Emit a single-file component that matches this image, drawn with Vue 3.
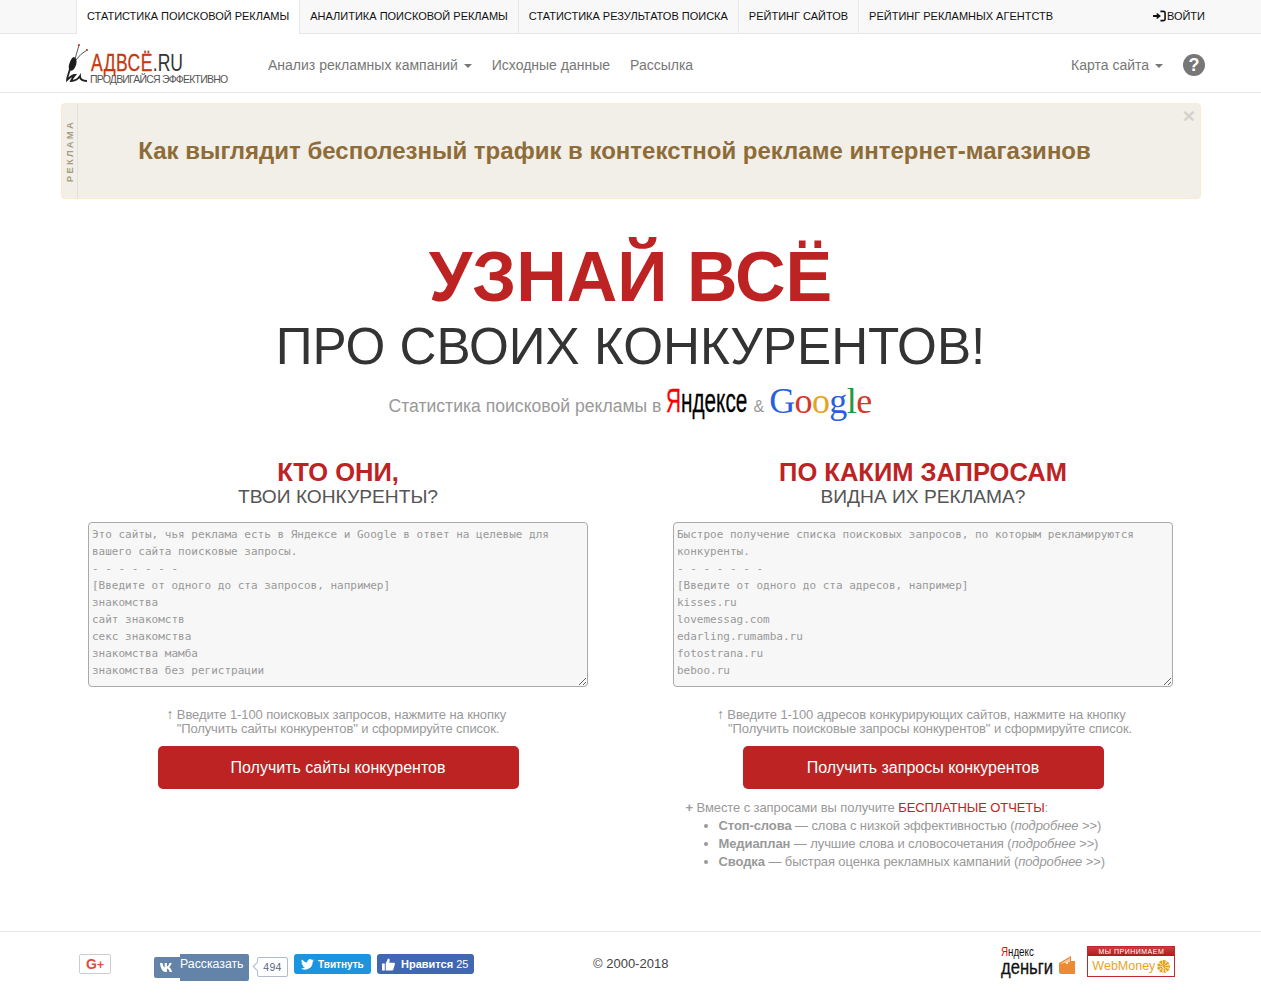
<template>
  <div class="page">
    <div class="topbar">
      <div class="tabs">
        <a v-for="(tab, i) in tabs" :key="tab" class="tab" :class="{ active: i === 0 }">{{ tab }}</a>
      </div>
      <a class="login">
        <svg width="13" height="12" viewBox="0 0 14 12">
          <path d="M0 4.800h4V2.400L8.600 6 4 9.600V7.200H0z" fill="#111" />
          <path d="M8 1h3.200A1.800 1.800 0 0 1 13 2.800v6.400A1.800 1.800 0 0 1 11.200 11H8" fill="none" stroke="#111" stroke-width="1.700" />
        </svg>
        ВОЙТИ
      </a>
    </div>

    <header class="navbar">
      <div class="logo">
        <svg class="bug" width="26" height="42" viewBox="0 0 26 42">
          <path d="M9 17 Q11 10 13 3" fill="none" stroke="#444" stroke-width="0.900" />
          <path d="M10 18 Q14 12 21 8" fill="none" stroke="#444" stroke-width="0.900" />
          <circle cx="13" cy="3" r="1" fill="#b8321c" />
          <circle cx="21" cy="8" r="1" fill="#b8321c" />
          <path d="M8 15 C12 17 11 24 7 28 C4 30 2 27 3 23 C4 19 6 15 8 15z" fill="#1d1d1d" />
          <path d="M4 27 C3 31 1 35 1 38 C3 36 6 33 9 33 C7 35 6 37 5 39 C9 39 12 37 14 34 C14 37 16 39 21 39" fill="none" stroke="#222" stroke-width="1.800" />
        </svg>
        <div class="logo-text">
          <div class="logo-name"><span class="logo-red">АДВСЁ</span>.RU</div>
          <div class="logo-slogan">ПРОДВИГАЙСЯ ЭФФЕКТИВНО</div>
        </div>
      </div>
      <nav class="menu">
        <a>Анализ рекламных кампаний <i class="caret"></i></a>
        <a>Исходные данные</a>
        <a>Рассылка</a>
      </nav>
      <div class="menu-right">
        <a>Карта сайта <i class="caret"></i></a>
        <span class="help">?</span>
      </div>
    </header>

    <div class="promo">
      <div class="promo-side"><span>РЕКЛАМА</span></div>
      <div class="promo-title">Как выглядит бесполезный трафик в контекстной рекламе интернет-магазинов</div>
      <span class="promo-close">×</span>
    </div>

    <section class="hero">
      <h1>УЗНАЙ ВСЁ</h1>
      <h2>ПРО СВОИХ КОНКУРЕНТОВ!</h2>
      <div class="hero-sub">
        <span>Статистика поисковой рекламы в</span>
        <span class="ya"><b>Я</b>ндексе</span>
        <span class="amp">&amp;</span>
        <span class="goog"><span class="g-blue">G</span><span class="g-red">o</span><span class="g-yellow">o</span><span class="g-blue">g</span><span class="g-green">l</span><span class="g-red">e</span></span>
      </div>
    </section>

    <main class="columns">
      <div v-for="col in columns" :key="col.title" class="col">
        <h3>{{ col.title }}</h3>
        <h4>{{ col.subtitle }}</h4>
        <textarea class="query" :placeholder="col.placeholder"></textarea>
        <p class="hint"><span class="arrow">↑</span> {{ col.hint1 }}&nbsp;<br />{{ col.hint2 }}</p>
        <button class="go">{{ col.button }}</button>
        <div v-if="col.reports" class="reports">
          <div class="reports-head"><b>+</b> Вместе с запросами вы получите <span class="free">БЕСПЛАТНЫЕ ОТЧЕТЫ</span>:</div>
          <ul>
            <li v-for="r in reports" :key="r.name"><b>{{ r.name }}</b> — {{ r.text }} (<em>подробнее</em> &gt;&gt;)</li>
          </ul>
        </div>
      </div>
    </main>

    <footer class="footer">
      <a class="gplus">G<sup>+</sup></a>
      <div class="vk">
        <span class="vk-icon">
          <svg width="14" height="9" viewBox="0 0 14 9">
            <path d="M0 0h2.400c.5 2.400 1.400 4 2.300 4.500V0h2.200v3.600C8 3.400 9 1.600 9.500 0h2.200c-.4 1.900-1.500 3.500-2.600 4.300 1.200.6 2.300 2 3 4.700h-2.400C9.200 7 8 5.800 6.900 5.600V9H6C2.600 9 .4 5.600 0 0z" fill="#fff" />
          </svg>
        </span>
        <span class="vk-label">Рассказать</span>
        <span class="vk-count">494</span>
      </div>
      <a class="tw">
        <svg width="13" height="11" viewBox="0 0 24 20">
          <path d="M24 2.400a9.800 9.800 0 0 1-2.800.8A5 5 0 0 0 23.300.5a9.800 9.800 0 0 1-3.100 1.200 4.900 4.900 0 0 0-8.400 4.500A14 14 0 0 1 1.700.9a4.900 4.900 0 0 0 1.500 6.600 4.900 4.900 0 0 1-2.200-.6c0 2.400 1.700 4.400 3.900 4.900a4.900 4.900 0 0 1-2.200.1 4.900 4.900 0 0 0 4.600 3.400A9.900 9.900 0 0 1 0 17.300 14 14 0 0 0 21.500 4.900 10 10 0 0 0 24 2.400z" fill="#fff" />
        </svg>
        Твитнуть
      </a>
      <a class="fb">
        <svg width="13" height="13" viewBox="0 0 14 13">
          <path d="M0 5.500h3V13H0zM4 5.500 6.500 0C8 0 8.600 1.200 8.200 2.600L7.800 4.500h4.700c1.200 0 1.700 1 1.300 2l-1.600 5.500c-.2.700-.7 1-1.400 1H4z" fill="#fff" />
        </svg>
        <span>Нравится <span class="fb-count">25</span></span>
      </a>
      <div class="copy">© 2000-2018</div>
      <div class="ymoney">
        <div class="ym-text">
          <div class="ym-top"><span>Я</span>ндекс</div>
          <div class="ym-bottom">деньги</div>
        </div>
        <svg class="wallet" width="18" height="20" viewBox="0 0 18 20">
          <path d="M1 8 13 1v5h4v13H3a2 2 0 0 1-2-2z" fill="#ee8a33" />
          <path d="M1.500 9 12 3v4z" fill="#fff" opacity="0.550" />
          <circle cx="9" cy="8" r="1" fill="#fff" />
        </svg>
      </div>
      <div class="wm">
        <div class="wm-top">МЫ ПРИНИМАЕМ</div>
        <div class="wm-bottom">
          <span>WebMoney</span>
          <i class="wm-globe"></i>
        </div>
      </div>
    </footer>
  </div>
</template>

<script setup>
const tabs = [
  'СТАТИСТИКА ПОИСКОВОЙ РЕКЛАМЫ',
  'АНАЛИТИКА ПОИСКОВОЙ РЕКЛАМЫ',
  'СТАТИСТИКА РЕЗУЛЬТАТОВ ПОИСКА',
  'РЕЙТИНГ САЙТОВ',
  'РЕЙТИНГ РЕКЛАМНЫХ АГЕНТСТВ'
]

const columns = [
  {
    title: 'КТО ОНИ,',
    subtitle: 'ТВОИ КОНКУРЕНТЫ?',
    placeholder:
      'Это сайты, чья реклама есть в Яндексе и Google в ответ на целевые для вашего сайта поисковые запросы.\n- - - - - - -\n[Введите от одного до ста запросов, например]\nзнакомства\nсайт знакомств\nсекс знакомства\nзнакомства мамба\nзнакомства без регистрации',
    hint1: 'Введите 1-100 поисковых запросов, нажмите на кнопку',
    hint2: '"Получить сайты конкурентов" и сформируйте список.',
    button: 'Получить сайты конкурентов'
  },
  {
    title: 'ПО КАКИМ ЗАПРОСАМ',
    subtitle: 'ВИДНА ИХ РЕКЛАМА?',
    placeholder:
      'Быстрое получение списка поисковых запросов, по которым рекламируются конкуренты.\n- - - - - - -\n[Введите от одного до ста адресов, например]\nkisses.ru\nlovemessag.com\nedarling.rumamba.ru\nfotostrana.ru\nbeboo.ru',
    hint1: 'Введите 1-100 адресов конкурирующих сайтов, нажмите на кнопку',
    hint2: '\u00a0\u00a0\u00a0\u00a0"Получить поисковые запросы конкурентов" и сформируйте список.',
    button: 'Получить запросы конкурентов',
    reports: true
  }
]

const reports = [
  { name: 'Стоп-слова', text: 'слова с низкой эффективностью' },
  { name: 'Медиаплан', text: 'лучшие слова и словосочетания' },
  { name: 'Сводка', text: 'быстрая оценка рекламных кампаний' }
]
</script>

<style>
body {
  background: #fff;
}
</style>

<style scoped>
.page {
  font-family: "Liberation Sans", Arial, sans-serif;
  font-size: 14px;
  color: #333;
}

/* Верхняя полоса */
.topbar {
  height: 33px;
  background: #f8f8f8;
  border-bottom: 1px solid #e7e7e7;
  display: flex;
  justify-content: space-between;
  padding: 0 56px 0 76px;
}

.tabs {
  display: flex;
}

.tab {
  padding: 0 10px;
  line-height: 32px;
  font-size: 11px;
  color: #111;
  border-right: 1px solid #e7e7e7;
}

.tab.active {
  background: #fff;
  height: 34px;
  border-left: 1px solid #e7e7e7;
}

.tab:last-child {
  border-right: none;
}

.login {
  display: flex;
  align-items: center;
  gap: 1px;
  padding-bottom: 2px;
  font-size: 11px;
  color: #111;
}

/* Навигация */
.navbar {
  height: 58px;
  border-bottom: 1px solid #e7e7e7;
  display: flex;
  align-items: center;
  padding: 0 56px 0 66px;
}

.logo {
  display: flex;
  align-items: flex-end;
  width: 202px;
  margin-top: -1px;
}

.bug {
  flex: none;
  margin-right: -2px;
}

.logo-name {
  margin-left: 1px;
  font-size: 24px;
  line-height: 22px;
  color: #333;
  transform: scaleX(0.730);
  transform-origin: left;
  white-space: nowrap;
}

.logo-red {
  color: #c4390d;
  letter-spacing: 0.600px;
  -webkit-text-stroke: 0.3px #c4390d;
}

.logo-slogan {
  font-size: 10.500px;
  line-height: 10px;
  letter-spacing: -0.800px;
  color: #555;
  white-space: nowrap;
}

.menu {
  display: flex;
  gap: 20px;
  flex: 1;
  padding-top: 4px;
  color: #777;
}

.menu-right {
  display: flex;
  align-items: center;
  gap: 20px;
  padding-top: 4px;
  color: #777;
}

.caret {
  display: inline-block;
  margin-left: 2px;
  vertical-align: middle;
  border-top: 4px solid #777;
  border-left: 4px solid transparent;
  border-right: 4px solid transparent;
}

.help {
  width: 22px;
  height: 22px;
  border-radius: 50%;
  background: #777;
  color: #fff;
  font-size: 18px;
  font-weight: 700;
  line-height: 22px;
  text-align: center;
}

/* Рекламный блок */
.promo {
  position: relative;
  margin: 10px 60px 0 61px;
  height: 96px;
  box-sizing: border-box;
  display: flex;
  background: #f2efe9;
  border: 1px solid #faebcc;
  border-radius: 4px;
}

.promo-side {
  width: 15px;
  border-right: 1px solid #e3e0d8;
  display: flex;
  align-items: center;
  justify-content: center;
}

.promo-side span {
  writing-mode: vertical-rl;
  transform: rotate(180deg);
  font-size: 9.500px;
  font-weight: 700;
  letter-spacing: 2.200px;
  color: #a89b80;
}

.promo-title {
  flex: 1;
  text-align: center;
  font-size: 24px;
  font-weight: 700;
  line-height: 93px;
  color: #8e6c38;
  padding-right: 49px;
}

.promo-close {
  position: absolute;
  top: 2px;
  right: 5px;
  font-size: 21px;
  line-height: 20px;
  font-weight: 700;
  color: #d5d2cc;
}

/* Заголовок */
.hero {
  text-align: center;
  padding-top: 37px;
}

.hero h1 {
  margin: 0;
  font-size: 70px;
  line-height: 82px;
  font-weight: 700;
  color: #bd2323;
}

.hero h2 {
  margin: 0;
  font-size: 51.200px;
  line-height: 57px;
  font-weight: 400;
  color: #333;
}

.hero-sub {
  height: 56px;
  padding-top: 7px;
  box-sizing: border-box;
  display: flex;
  align-items: center;
  justify-content: center;
  font-size: 17.600px;
  color: #999;
  padding-right: 1px;
}

.ya {
  display: inline-block;
  margin: -12px 0 0 5px;
  width: 81px;
  font-size: 34px;
  color: #000;
  transform: scaleX(0.610);
  transform-origin: left;
  white-space: nowrap;
  -webkit-text-stroke: 0.3px #000;
}

.ya b {
  font-weight: 400;
  color: #f00;
  -webkit-text-stroke: 0.3px #f00;
}

.amp {
  margin: 0 5px 0 6px;
  font-size: 16px;
}

.goog {
  font-family: "Liberation Serif", serif;
  font-size: 36px;
  margin-top: -12px;
  letter-spacing: -0.600px;
}

.g-blue { color: #2a5fdc; }
.g-red { color: #d9352b; }
.g-yellow { color: #e5a41c; }
.g-green { color: #229a3a; }

/* Колонки */
.columns {
  display: grid;
  grid-template-columns: 585px 585px;
  padding-left: 45.500px;
  height: 500px;
}

.col {
  display: flex;
  flex-direction: column;
  align-items: center;
  padding-top: 27px;
}

.col h3 {
  margin: 0;
  font-size: 25.500px;
  line-height: 28px;
  font-weight: 700;
  color: #bd2323;
}

.col h4 {
  margin: 1px 0 0;
  font-size: 19.200px;
  line-height: 20px;
  font-weight: 400;
  color: #555;
}

.query {
  margin-top: 15px;
  width: 500px;
  height: 165px;
  box-sizing: border-box;
  padding: 3px;
  background: #f7f7f7;
  border: 1px solid #aaa;
  border-radius: 4px;
  font-family: "DejaVu Sans Mono", monospace;
  font-size: 11px;
  line-height: 17px;
}

.query::placeholder {
  color: #999;
  opacity: 1;
}

.hint {
  margin: 20px 0 0;
  text-align: center;
  line-height: 14px;
  font-size: 13px;
  letter-spacing: -0.100px;
  color: #999;
}

.arrow {
  color: #888;
  font-size: 14px;
}

.go {
  margin-top: 10px;
  width: 361px;
  height: 43px;
  border: none;
  border-radius: 5px;
  background: #bd2323;
  color: #fff;
  font-family: inherit;
  font-size: 16px;
}

.reports {
  align-self: flex-start;
  margin: 10px 0 0 55px;
  color: #999;
  font-size: 13px;
  line-height: 18px;
  letter-spacing: -0.100px;
}

.reports ul {
  margin: 0;
  padding-left: 33px;
}

.free {
  color: #bd2323;
}

/* Подвал */
.footer {
  height: 62px;
  box-sizing: border-box;
  border-top: 1px solid #e7e7e7;
  display: flex;
  align-items: flex-start;
  padding: 22px 0 0 79px;
}

.gplus {
  width: 32px;
  height: 20px;
  box-sizing: border-box;
  border: 1px solid #ccc;
  border-radius: 2px;
  color: #dc4e41;
  font-weight: 700;
  font-size: 14px;
  line-height: 18px;
  text-align: center;
}

.gplus sup {
  font-size: 12px;
  line-height: 0;
  vertical-align: 0;
}

.vk {
  margin-left: 43px;
  display: flex;
  align-items: flex-start;
  color: #fff;
  font-size: 12.300px;
}

.vk-icon {
  width: 26px;
  height: 21px;
  margin-top: 3px;
  background: #6383a8;
  border-radius: 2px 0 0 2px;
  display: flex;
  align-items: center;
  justify-content: center;
}

.vk-label {
  width: 69px;
  height: 27px;
  background: #6383a8;
  border-radius: 0 2px 2px 0;
  line-height: 20px;
}

.vk-count {
  position: relative;
  margin: 3px 0 0 8px;
  width: 31px;
  height: 20px;
  box-sizing: border-box;
  border: 1px solid #adbdcc;
  border-radius: 2px;
  color: #55677d;
  font-size: 10.500px;
  line-height: 19px;
  text-align: center;
  letter-spacing: 0.300px;
}

.vk-count::before {
  content: "";
  position: absolute;
  left: -4px;
  top: 5px;
  width: 6px;
  height: 6px;
  background: #fff;
  border-left: 1px solid #adbdcc;
  border-bottom: 1px solid #adbdcc;
  transform: rotate(45deg);
}

.tw,
.fb {
  height: 20px;
  border-radius: 3px;
  color: #fff;
  font-weight: 700;
  display: flex;
  align-items: center;
  box-sizing: border-box;
}

.tw {
  margin-left: 6px;
  width: 77px;
  padding-left: 7px;
  gap: 4px;
  font-size: 10px;
  background: #1b95e0;
}

.fb {
  margin-left: 6px;
  width: 97px;
  padding-left: 5px;
  gap: 6px;
  font-size: 11px;
  background: #4267b2;
}

.fb-count {
  font-weight: 400;
}

.copy {
  margin-left: 119px;
  font-size: 13px;
  line-height: 20px;
  color: #444;
}

.ymoney {
  margin-left: 333px;
  margin-top: -9px;
  width: 75px;
  display: flex;
  align-items: flex-end;
  gap: 5px;
}

.wallet {
  margin-bottom: 1px;
}

.ym-text {
  width: 52px;
  white-space: nowrap;
}

.ym-top {
  font-size: 13px;
  line-height: 13px;
  color: #111;
  transform: scaleX(0.750);
  transform-origin: left;
}

.ym-top span {
  color: #f00;
}

.ym-bottom {
  font-size: 20px;
  line-height: 18px;
  color: #111;
  transform: scaleX(0.830);
  transform-origin: left;
  -webkit-text-stroke: 0.3px #111;
}

.wm {
  margin-left: 11px;
  margin-top: -8px;
  width: 88px;
  height: 31px;
  box-sizing: border-box;
  border: 1px solid #c0272d;
  background: #fff;
}

.wm-top {
  height: 9px;
  background: linear-gradient(#d23a3a, #a81e1e);
  color: #fff;
  font-size: 7px;
  line-height: 9px;
  text-align: center;
  letter-spacing: 0.500px;
}

.wm-bottom {
  display: flex;
  align-items: center;
  padding-left: 4px;
  gap: 2px;
  height: 20px;
  font-size: 12.500px;
  color: #e3a51f;
}

.wm-globe {
  width: 13px;
  height: 13px;
  border-radius: 50%;
  background: repeating-conic-gradient(#e3a51f 0 20deg, #f3d58d 20deg 40deg);
}
</style>
